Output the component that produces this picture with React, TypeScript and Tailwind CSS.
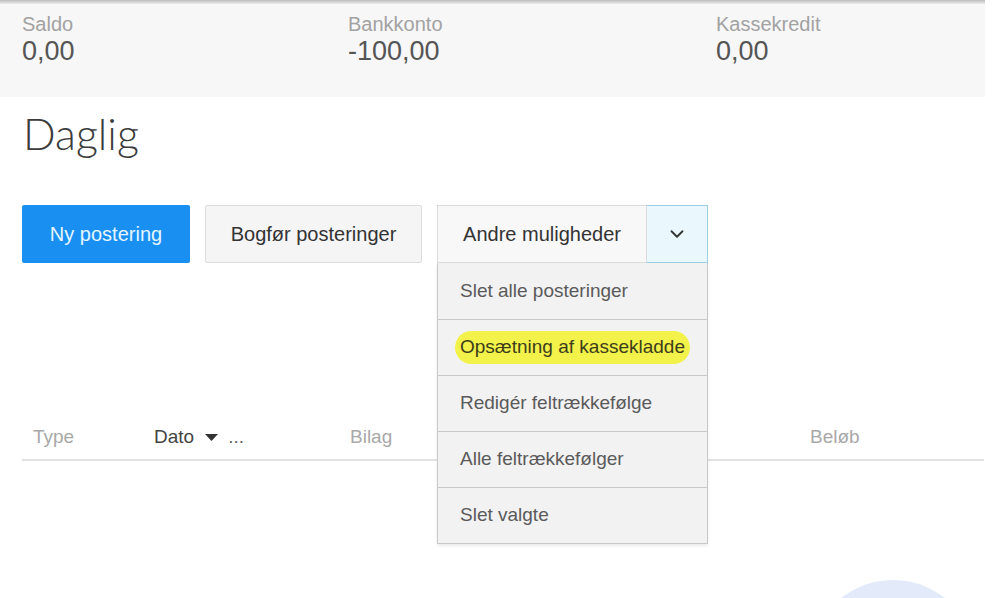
import { ChevronDown } from 'lucide-react'

const summary = [
    { label: 'Saldo', value: '0,00', width: 'w-[326px]' },
    { label: 'Bankkonto', value: '-100,00', width: 'w-[368px]' },
    { label: 'Kassekredit', value: '0,00', width: 'w-[200px]' },
]

const menuItems = ['Slet alle posteringer', 'Opsætning af kassekladde', 'Redigér feltrækkefølge', 'Alle feltrækkefølger', 'Slet valgte']

export default function App() {
    return (
        <div className="relative h-[598px] w-[994px] overflow-hidden bg-white font-['Liberation_Sans',Arial,sans-serif]">
            {/* Summary band */}
            <div className="w-[985px] bg-[#f7f7f7]">
                <div className="h-[4px] bg-gradient-to-b from-[#bdbdbd] to-[#ececec]" />
                <div className="flex px-[22px] pt-[8px] pb-[31px]">
                    {summary.map(s => (
                        <div key={s.label} className={`${s.width} flex flex-col`}>
                            <span className="text-[20px] leading-[24px] text-[#a2a2a2]">{s.label}</span>
                            <span className="text-[27px] leading-[30px] text-[#555]">{s.value}</span>
                        </div>
                    ))}
                </div>
            </div>

            {/* Title */}
            <h1 className="mt-[11px] pl-[23px] font-['Lato',sans-serif] text-[43px] font-light leading-[52px] text-[#3c3c3c]">
                Daglig
            </h1>

            {/* Action buttons */}
            <div className="mt-[45px] flex gap-[15px] pl-[22px]">
                <button className="flex h-[58px] w-[168px] items-center justify-center rounded-[2px] bg-[#1a8ff2] text-[20px] text-[#e4f5ff]">
                    Ny postering
                </button>
                <button className="flex h-[58px] w-[217px] items-center justify-center rounded-[2px] border border-[#dcdcdc] bg-[#f5f5f5] text-[20px] text-[#333]">
                    Bogfør posteringer
                </button>
                <div className="relative flex h-[58px] w-[271px]">
                    <button className="flex h-full w-[209px] items-center justify-center border border-r-0 border-[#dcdcdc] bg-[#f8f8f8] text-[20px] text-[#333]">
                        Andre muligheder
                    </button>
                    <button className="flex h-full w-[62px] items-center justify-center border border-[#9ccfe6] border-l-[#dcdcdc] bg-[#eaf8fd] text-[#333]">
                        <ChevronDown className="h-[22px] w-[22px]" strokeWidth={2} />
                    </button>

                    {/* Dropdown menu */}
                    <div className="absolute left-0 top-full z-10 w-[271px] border border-t-0 border-[#c9c9c9] bg-[#f2f2f2] shadow-[0_2px_3px_rgba(0,0,0,0.08)]">
                        {menuItems.map((item, i) => (
                            <div
                                key={item}
                                className={`flex h-[56px] items-center pl-[22px] text-[19px] text-[#5a5a5a] ${i > 0 ? 'border-t border-[#c9c9c9]' : ''}`}
                            >
                                {i === 1 ? (
                                    <span className="-ml-[5px] rounded-full bg-[#f2f24a] px-[5px] py-[2px] text-[#3d3d1a]">{item}</span>
                                ) : (
                                    item
                                )}
                            </div>
                        ))}
                    </div>
                </div>
            </div>

            {/* Table header */}
            <div className="ml-[22px] mt-[162px] flex w-[962px] border-b-2 border-[#e2e2e2] pb-[10px] text-[19px] leading-[24px]">
                <span className="w-[132px] pl-[11px] text-[#a8a8a8]">Type</span>
                <span className="flex w-[196px] items-center text-[#444]">
                    Dato
                    <svg className="ml-[11px] h-[7px] w-[13px]" viewBox="0 0 13 7">
                        <path d="M0 0h13L6.5 7z" fill="#333" />
                    </svg>
                    <span className="ml-[10px] text-[#666]">...</span>
                </span>
                <span className="w-[460px] text-[#a8a8a8]">Bilag</span>
                <span className="text-[#a8a8a8]">Beløb</span>
            </div>

            {/* Floating help bubble (partly visible) */}
            <div className="absolute left-[809px] top-[580px] h-[168px] w-[168px] rounded-full bg-[#e3ebfa]" />
        </div>
    )
}
